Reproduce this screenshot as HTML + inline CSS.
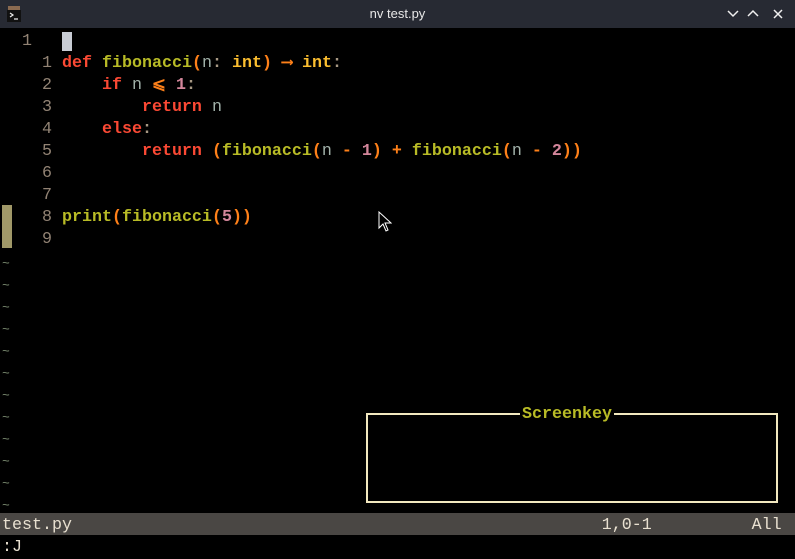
<!DOCTYPE html>
<html><head><meta charset="utf-8"><style>
*{margin:0;padding:0;box-sizing:border-box}
html,body{width:795px;height:559px;background:#000;overflow:hidden}
body{position:relative;font-family:"Liberation Mono","DejaVu Sans Mono",monospace;font-size:16.67px;}
#tb{position:absolute;left:0;top:0;width:795px;height:28px;background:#272a33;}
#title{position:absolute;left:0;width:795px;top:6px;text-align:center;color:#e8e8e8;font-family:"Liberation Sans",sans-serif;font-size:13px;}
.r{position:absolute;left:2px;height:22px;line-height:22px;white-space:pre;color:#ebdbb2;margin-top:2px}
.k,.f,.p,.n,.t,.m,.c{font-weight:bold}
.k{color:#fb4934}.f{color:#b8bb26}.p{color:#fe8019}.n{color:#a3b3ab;font-weight:normal}.t{color:#fabd2f}.m{color:#d3869b}.g{color:#928374}.c{color:#a89984}
.tl{color:#7a8a70;font-size:13px}
#status{position:absolute;left:0;top:513px;width:795px;height:22px;background:#4a4744;}
#box{position:absolute;left:366px;top:413px;width:412px;height:90px;border:2px solid #f2e8bf;}
#bt{position:absolute;left:520px;top:404px;background:#000;color:#b8bb26;padding:0 2px;line-height:22px;font-size:16.67px;font-weight:bold}
</style></head><body>
<div id="tb">
<svg style="position:absolute;left:7px;top:5px" width="14" height="18" viewBox="0 0 14 18"><rect x="1" y="1" width="12" height="4" fill="#8a6a50"/><rect x="0" y="5" width="14" height="12" fill="#111"/><path d="M3 8l3 2-3 2M7 14h4" stroke="#eee" fill="none" stroke-width="1.2"/></svg>
<div id="title">nv test.py</div>
<svg style="position:absolute;left:725px;top:8px" width="64" height="12" viewBox="0 0 64 12"><path d="M3 3l5 5 5-5M23 8l5-5 5 5M49 2l8 8M57 2l-8 8" stroke="#f0f0f0" stroke-width="1.5" fill="none"/></svg>
</div>
<div class="r" style="top:29px"><span class="g">  1   </span><span style="background:#c8ccd4;color:#000"> </span></div>
<div class="r" style="top:51px"><span class="g">    1 </span><span class="k">def</span> <span class="f">fibonacci</span><span class="p">(</span><span class="n">n</span><span class="c">:</span> <span class="t">int</span><span class="p">)</span> <span class="p">⟶</span> <span class="t">int</span><span class="c">:</span></div>
<div class="r" style="top:73px"><span class="g">    2 </span>    <span class="k">if</span> <span class="n">n</span> <span class="p">⩽</span> <span class="m">1</span><span class="c">:</span></div>
<div class="r" style="top:95px"><span class="g">    3 </span>        <span class="k">return</span> <span class="n">n</span></div>
<div class="r" style="top:117px"><span class="g">    4 </span>    <span class="k">else</span><span class="c">:</span></div>
<div class="r" style="top:139px"><span class="g">    5 </span>        <span class="k">return</span> <span class="p">(</span><span class="f">fibonacci</span><span class="p">(</span><span class="n">n</span> <span class="p">-</span> <span class="m">1</span><span class="p">)</span> <span class="p">+</span> <span class="f">fibonacci</span><span class="p">(</span><span class="n">n</span> <span class="p">-</span> <span class="m">2</span><span class="p">))</span></div>
<div class="r" style="top:161px"><span class="g">    6 </span></div>
<div class="r" style="top:183px"><span class="g">    7 </span></div>
<div class="r" style="top:205px"><span class="g">    8 </span><span class="f">print</span><span class="p">(</span><span class="f">fibonacci</span><span class="p">(</span><span class="m">5</span><span class="p">))</span></div>
<div class="r" style="top:227px"><span class="g">    9 </span></div>
<div style="position:absolute;left:2px;top:205px;width:10px;height:43px;background:#a09868"></div>
<div class="r tl" style="top:251px">~</div>
<div class="r tl" style="top:273px">~</div>
<div class="r tl" style="top:295px">~</div>
<div class="r tl" style="top:317px">~</div>
<div class="r tl" style="top:339px">~</div>
<div class="r tl" style="top:361px">~</div>
<div class="r tl" style="top:383px">~</div>
<div class="r tl" style="top:405px">~</div>
<div class="r tl" style="top:427px">~</div>
<div class="r tl" style="top:449px">~</div>
<div class="r tl" style="top:471px">~</div>
<div class="r tl" style="top:493px">~</div>
<div id="box"></div>
<div id="bt">Screenkey</div>
<svg style="position:absolute;left:378px;top:211px" width="14" height="22" viewBox="0 0 14 22"><path d="M1 1v16l4-4 3 7 2-1-3-7h6z" fill="#000" stroke="#fff" stroke-width="1"/></svg>
<div id="status"></div>
<div class="r" style="top:513px;color:#e8e0d0">test.py                                                     1,0-1          All</div>
<div class="r" style="top:535px;color:#e8e0d0">:J</div>
</body></html>
